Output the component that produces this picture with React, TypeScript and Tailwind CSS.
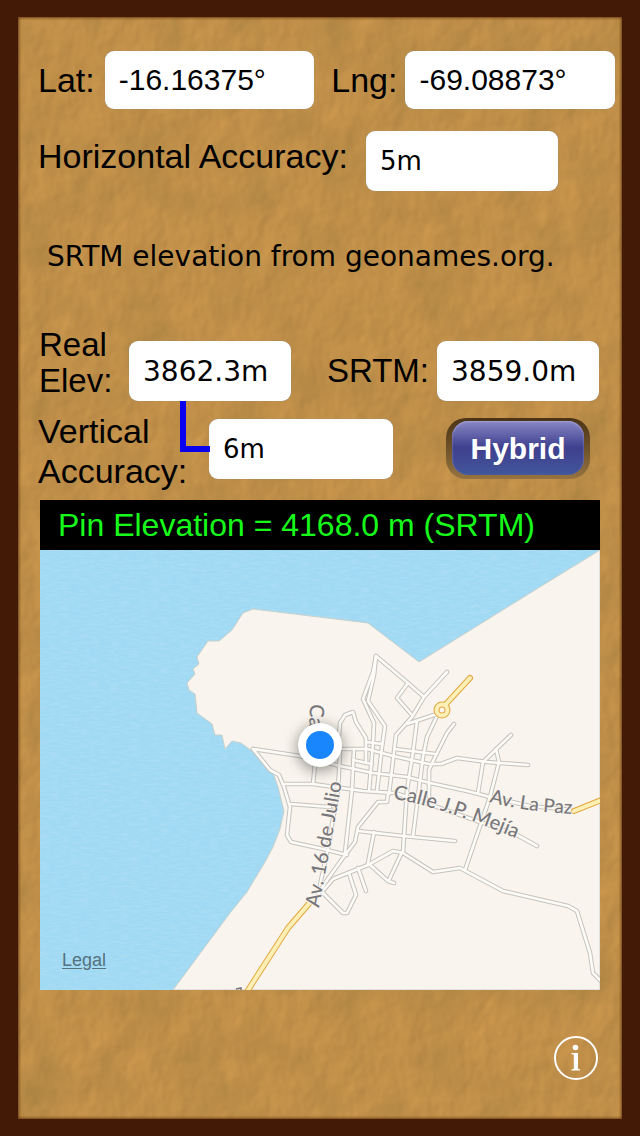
import React from 'react'

/**
 * Elevation screen
 *
 * Shows the current GPS fix, the measured and SRTM elevations,
 * and a map with the elevation of the dropped pin.
 */

interface ReadoutProps {
  id: string
  value: string
  className?: string
}

// White rounded text box used for every reading
const Readout: React.FC<ReadoutProps> = ({ id, value, className = '' }) => (
  <input
    id={id}
    type="text"
    readOnly
    defaultValue={value}
    className={`min-w-0 rounded-[9px] bg-white pl-3.5 pr-2 text-black shadow-[0_0_1px_#77808c] outline-none ${className}`}
  />
)

const COAST =
  'M600 550 L535 590 L419 662 L368 623 L253 609 L243 613 L232 630 L219 641 L208 641 L197 657 L199 664 L193 669 L195 674 L187 683 L189 690 L195 694 L197 713 L212 724 L215 735 L222 735 L225 749 L232 741 L241 743 L252 751 L262 760 L272 770 L278 787 L284 811 L280 829 L273 847 L265 862 L247 892 L230 913 L173 990 L600 990 Z'

const STREETS = [
  // north loop and the avenues that run down from it
  'M376 656 L373 672 L363 699 L374 723 L373 743 L369 791',
  'M376 656 L374 675 L368 701 L385 726 L382 747 L377 791',
  'M376 656 L408 683 L424 697',
  'M447 672 L424 697 L412 717 L396 735 L394 752 L389 794',
  'M408 683 L397 698 L412 715',
  'M407 724 L437 714',
  'M417 721 L413 752 L407 790 L403 852',
  'M437 716 L427 737 L423 757 L413 836',
  'M454 724 L447 733 L435 757 L429 770 L429 797',
  'M338 748 L340 723 L345 715 L353 712 L356 722 L366 738 L366 763',
  // cross streets
  'M366 742 L382 744',
  'M338 749 L367 749 L393 756 L429 764 L441 764 L457 758 L487 762 L528 765',
  'M395 749 L435 754',
  'M353 760 L372 764',
  'M253 749 L300 756 L340 766 L373 773 L407 777 L430 783 L467 791 L490 797 L530 806 L573 810',
  'M511 735 L483 762 L478 793',
  'M496 749 L499 762 L490 797 L465 870',
  // west side
  'M253 749 L270 770 L279 775 L284 787 L290 807 L287 835 L291 842 L323 849 L347 855',
  'M283 784 L313 784 L363 791 L395 793 L440 808 L517 835 L537 846',
  'M290 804 L330 807',
  'M315 764 L313 784',
  'M340 753 L338 790 L328 848 L320 885',
  'M354 749 L352 790 L345 853',
  'M388 794 L387 802 L378 802 L358 827 L355 842 L345 855 L325 883 L318 895',
  'M358 831 L403 836 L455 841',
  'M374 832 L368 863',
  // south road
  'M322 892 L333 879 L368 865 L393 851 L403 853 L433 872 L460 868 L503 891 L568 906 L577 911 L590 953 L593 973 L602 982',
  'M368 863 L388 881 L394 883',
  'M402 852 L389 880',
  'M358 868 L366 891',
  'M349 873 L356 895 L347 913 L343 913 L322 892',
]

const HIGHWAYS = [
  'M470 678 L446 704',
  'M313 899 L288 928 L250 987 L246 994',
  'M574 811 L604 799',
]

const MapView: React.FC = () => (
  <svg viewBox="40 550 560 440" className="block w-full bg-[#a0d9f3]" role="img" aria-label="Map">
    <defs>
      <filter id="water" x="0" y="0" width="100%" height="100%">
        <feTurbulence type="fractalNoise" baseFrequency="0.1 0.5" numOctaves="2" seed="4" />
        <feColorMatrix values="0 0 0 0 1  0 0 0 0 1  0 0 0 0 1  0.25 0 0 0 -0.09" />
      </filter>
      <filter id="pin-shadow" x="-50%" y="-50%" width="200%" height="200%">
        <feGaussianBlur stdDeviation="7" />
      </filter>
      <path id="julio" d="M319 908 L332 837 L343 776" />
      <path id="mejia" d="M393 799 Q440 806 525 842" />
      <path id="lapaz" d="M489 802 Q530 813 580 814" />
    </defs>

    <rect x="40" y="550" width="560" height="440" filter="url(#water)" />
    <path d={COAST} fill="#f9f4ed" stroke="#c9d0cc" strokeWidth="1" />

    <g fill="none" strokeLinejoin="round" strokeLinecap="round">
      <g stroke="#c6c2bd" strokeWidth="4.6">
        {STREETS.map((d) => (
          <path key={d} d={d} />
        ))}
      </g>
      <g stroke="#fdfbf8" strokeWidth="2.6">
        {STREETS.map((d) => (
          <path key={d} d={d} />
        ))}
      </g>
      <g stroke="#e3a73f">
        {HIGHWAYS.map((d) => (
          <path key={d} d={d} strokeWidth="6" />
        ))}
        <circle cx="442" cy="710" r="5.5" strokeWidth="6" />
      </g>
      <g stroke="#fdf0b6">
        {HIGHWAYS.map((d) => (
          <path key={d} d={d} strokeWidth="4" />
        ))}
        <circle cx="442" cy="710" r="5.5" strokeWidth="4" />
      </g>
    </g>
    <path d="M236 989 L241 988 L241 991" fill="none" stroke="#777" strokeWidth="1.5" />

    <g
      fill="#77777b"
      stroke="#f9f4ed"
      strokeWidth="2"
      paintOrder="stroke"
      strokeLinejoin="round"
      className="font-['Lato','Open_Sans',sans-serif] text-[20px] font-medium"
    >
      <text>
        <textPath href="#julio">Av. 16 de Julio</textPath>
      </text>
      <text>
        <textPath href="#mejia">Calle J.P. Mejía</textPath>
      </text>
      <text className="text-[19px]">
        <textPath href="#lapaz">Av. La Paz</textPath>
      </text>
      <text transform="translate(310 704) rotate(92)">Ca</text>
    </g>

    <circle cx="320" cy="748" r="23" fill="#000" opacity="0.4" filter="url(#pin-shadow)" />
    <circle cx="320" cy="745" r="22" fill="#fff" />
    <circle cx="320" cy="745" r="14" fill="#1a86fd" />
  </svg>
)

// Sandy wall texture behind the controls
const Texture: React.FC = () => (
  <svg className="absolute inset-0 h-full w-full" aria-hidden="true">
    <filter id="sand" x="0" y="0" width="100%" height="100%" colorInterpolationFilters="sRGB">
      <feTurbulence type="fractalNoise" baseFrequency="0.04 0.03" numOctaves="3" seed="8" result="noise" />
      <feDiffuseLighting in="noise" surfaceScale="0.8" diffuseConstant="1.15" lightingColor="#c3914a">
        <feDistantLight azimuth="215" elevation="60" />
      </feDiffuseLighting>
    </filter>
    <filter id="tint" x="0" y="0" width="100%" height="100%" colorInterpolationFilters="sRGB">
      <feTurbulence type="fractalNoise" baseFrequency="0.02" numOctaves="3" seed="21" />
      <feColorMatrix values="0 0 0 0 0.6  0 0 0 0 0.48  0 0 0 0 0.24  0.8 0 0 0 -0.32" />
    </filter>
    <rect width="100%" height="100%" filter="url(#sand)" />
    <rect width="100%" height="100%" filter="url(#tint)" />
  </svg>
)

export default function App() {
  return (
    <main className="relative min-h-screen border-x-[18px] border-y-[17px] border-[#431a06] bg-[#c08f49] font-['Liberation_Sans',Arial,sans-serif] text-black">
      <Texture />
      <div className="absolute inset-0 shadow-[inset_0_0_3px_1px_#6b3d14]" />

      <div className="relative pt-[34px]">
        {/* Position */}
        <div className="flex items-center pl-5 pr-[7px]">
          <label htmlFor="lat" className="mr-2.5 text-[34px]">Lat:</label>
          <Readout id="lat" value="-16.16375°" className="h-[58px] flex-1 text-[30px]" />
          <label htmlFor="lng" className="ml-[17px] mr-2 text-[34px]">Lng:</label>
          <Readout id="lng" value="-69.08873°" className="h-[58px] flex-1 text-[30px]" />
        </div>

        <div className="mt-[22px] flex items-center pl-5">
          <label htmlFor="hacc" className="mr-[18px] pb-2.5 text-[34px] leading-10">Horizontal Accuracy:</label>
          <Readout id="hacc" value="5m" className="h-[60px] w-48 font-['DejaVu_Sans',sans-serif] text-[26px]" />
        </div>

        <p className="mt-11 pl-[29px] font-['DejaVu_Sans',sans-serif] text-[28px] leading-[44px]">
          SRTM elevation from geonames.org.
        </p>

        {/* Elevations */}
        <div className="mt-12 flex items-end justify-between pl-[21px] pr-[23px]">
          <div className="flex items-end">
            <label htmlFor="real" className="w-[90px] pb-0.5 text-[33px] leading-9">
              Real<br />Elev:
            </label>
            <Readout id="real" value="3862.3m" className="h-[60px] w-[162px] font-['DejaVu_Sans',sans-serif] text-[28px]" />
          </div>
          <div className="flex items-center gap-2">
            <label htmlFor="srtm" className="text-[33px]">SRTM:</label>
            <Readout id="srtm" value="3859.0m" className="h-[60px] w-[162px] font-['DejaVu_Sans',sans-serif] text-[28px]" />
          </div>
        </div>

        <div className="relative mt-2.5 flex items-start justify-between pl-5 pr-8">
          <div className="flex items-start">
            <label htmlFor="vacc" className="w-[171px] text-[34px] leading-10">
              Vertical<br />Accuracy:
            </label>
            <Readout id="vacc" value="6m" className="mt-2 h-[60px] w-[184px] font-['DejaVu_Sans',sans-serif] text-[26px]" />
          </div>
          {/* Ties the vertical accuracy to the real elevation */}
          <div className="absolute -top-2.5 left-[162px] h-[51px] w-[30px] border-b-[6px] border-l-[6px] border-[#0a00f0]" />
          <button
            type="button"
            className="mt-[7px] h-[61px] w-36 rounded-[20px] bg-linear-to-b from-[#4a3316] to-[#96743f] px-[6px] pb-1 pt-[3px]"
          >
            <span className="flex h-full items-center justify-center rounded-2xl bg-linear-to-b from-[#8886c4] via-[#3f3f8e] via-50% to-[#42579b] text-[30px] font-bold text-white shadow-[inset_0_1px_2px_#a5a3d4]">
              Hybrid
            </span>
          </button>
        </div>

        {/* Map */}
        <section className="relative mx-[22px] mt-[9px]">
          <h1 className="bg-black pl-[18px] text-[32px] leading-[50px] text-[#17fb1b]">
            Pin Elevation = 4168.0 m (SRTM)
          </h1>
          <MapView />
          <a href="#legal" className="absolute bottom-4 left-[22px] text-[18px] text-[#54727f] underline underline-offset-2">
            Legal
          </a>
        </section>

        <div className="flex justify-end pb-9 pr-6 pt-[46px]">
          <button type="button" aria-label="Info" className="h-11 w-11">
            <svg viewBox="0 0 44 44" className="h-full w-full" fill="#fff">
              <circle cx="22" cy="22" r="21" fill="none" stroke="#fff" strokeWidth="2" />
              <circle cx="21.5" cy="11.5" r="2.8" />
              <path d="M17.5 17 H24 V33 L26 33.3 V34.5 H17.5 V33.3 L19.8 33 V18.6 L17.5 18.2 Z" />
            </svg>
          </button>
        </div>
      </div>
    </main>
  )
}
